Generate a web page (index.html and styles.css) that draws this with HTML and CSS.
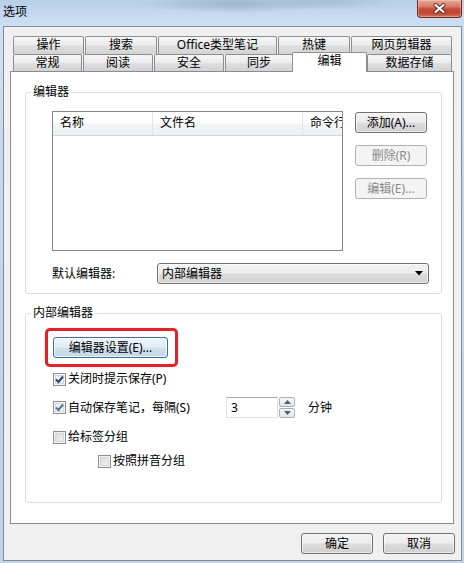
FILE: index.html
```html
<!DOCTYPE html>
<html lang="zh-CN">
<head>
<meta charset="utf-8">
<title>选项</title>
<link rel="stylesheet" href="styles.css">
</head>
<body>
<div class="window">
  <div class="titlebar">
    <span class="title">选项</span>
    <div class="close">
      <svg width="13" height="11" viewBox="0 0 13 11"><path d="M2.5 2 L10.5 9 M10.5 2 L2.5 9" stroke="#5a2a24" stroke-width="4" stroke-linecap="round"/><path d="M2.5 2 L10.5 9 M10.5 2 L2.5 9" stroke="#ffffff" stroke-width="2.2" stroke-linecap="round"/></svg>
    </div>
  </div>
  <div class="frame">
    <div class="client">
      <div class="tabctl">
        <div class="tabrow row1">
          <div class="tab w71">操作</div>
          <div class="tab w72">搜索</div>
          <div class="tab w119">Office类型笔记</div>
          <div class="tab w72">热键</div>
          <div class="tab w101">网页剪辑器</div>
        </div>
        <div class="tabrow row2">
          <div class="tab w69">常规</div>
          <div class="tab w70">阅读</div>
          <div class="tab w70">安全</div>
          <div class="tab w68">同步</div>
          <div class="tab sel">编辑</div>
          <div class="tab w85 last">数据存储</div>
        </div>
        <div class="page">
          <fieldset class="group g1">
            <legend>编辑器</legend>
            <div class="g1body">
              <div class="listrow">
                <div class="list">
                  <div class="lhead">
                    <div class="hc c1">名称</div>
                    <div class="hc c2">文件名</div>
                    <div class="hc c3">命令行</div>
                  </div>
                </div>
                <div class="sidebtns">
                  <div class="btn side">添加(A)...</div>
                  <div class="btn side disabled">删除(R)</div>
                  <div class="btn side disabled">编辑(E)...</div>
                </div>
              </div>
              <div class="comborow">
                <span class="clabel">默认编辑器:</span>
                <div class="combo">
                  <span>内部编辑器</span>
                  <svg width="8" height="5" viewBox="0 0 8 5"><path d="M0 0 H8 L4 4.5 Z" fill="#000"/></svg>
                </div>
              </div>
            </div>
          </fieldset>
          <fieldset class="group g2">
            <legend>内部编辑器</legend>
            <div class="g2body">
              <div class="highlight">
                <div class="btn focus wide">编辑器设置(E)...</div>
              </div>
              <div class="cbrow r1">
                <span class="cb checked"><svg width="11" height="11" viewBox="0 0 11 11"><path d="M2 5.5 L4.5 8 L9 2.5" fill="none" stroke="#23407e" stroke-width="2"/></svg></span>
                <span class="cblabel">关闭时提示保存(P)</span>
              </div>
              <div class="cbrow r2">
                <span class="cb checked light"><svg width="11" height="11" viewBox="0 0 11 11"><path d="M2 5.5 L4.5 8 L9 2.5" fill="none" stroke="#5a6f9a" stroke-width="2"/></svg></span>
                <span class="cblabel fixed">自动保存笔记，每隔(S)</span>
                <div class="spinedit">3</div>
                <div class="spinner">
                  <div class="sbtn"><svg width="7" height="4" viewBox="0 0 7 4"><path d="M0 4 H7 L3.5 0 Z" fill="#4c607a"/></svg></div>
                  <div class="sbtn"><svg width="7" height="4" viewBox="0 0 7 4"><path d="M0 0 H7 L3.5 4 Z" fill="#4c607a"/></svg></div>
                </div>
                <span class="unit">分钟</span>
              </div>
              <div class="cbrow r3">
                <span class="cb"></span>
                <span class="cblabel">给标签分组</span>
              </div>
              <div class="cbrow r4">
                <span class="cb"></span>
                <span class="cblabel">按照拼音分组</span>
              </div>
            </div>
          </fieldset>
        </div>
      </div>
      <div class="footer">
        <div class="btn foot">确定</div>
        <div class="btn foot">取消</div>
      </div>
    </div>
  </div>
</div>
</body>
</html>
```
FILE: styles.css
```css
* { box-sizing: border-box; }
html, body { margin: 0; padding: 0; }
body {
  width: 464px;
  height: 563px;
  overflow: hidden;
  font-family: "Noto Sans", "Noto Sans CJK SC", sans-serif;
  font-size: 12px;
  line-height: 14px;
  color: #000;
}
.window {
  width: 464px;
  height: 563px;
  display: flex;
  flex-direction: column;
  background:
    radial-gradient(ellipse 95px 9px at 235px 4px, rgba(110,125,150,0.35), rgba(110,125,150,0) 100%),
    radial-gradient(ellipse 60px 8px at 330px 2px, rgba(120,135,160,0.25), rgba(120,135,160,0) 100%),
    linear-gradient(180deg, #b7cfe8 0px, #c6d9ee 14px, #cddff2 26px, #c3d7ed 200px, #bfd3ea 563px);
}
.titlebar {
  height: 26px;
  flex: none;
  display: flex;
  justify-content: space-between;
  align-items: flex-start;
  padding-left: 3px;
}
.title {
  padding-top: 5px;
  line-height: 14px;
  font-size: 12px;
}
.close {
  width: 45px;
  height: 18px;
  margin-right: 2px;
  border: 1px solid #6e2b22;
  border-top: none;
  border-radius: 0 0 4px 4px;
  background: linear-gradient(180deg, #e7a998 0%, #d77a65 40%, #c44c35 52%, #c0452e 75%, #d2735b 100%);
  box-shadow: inset 0 0 0 1px rgba(255,230,220,0.35);
  display: flex;
  align-items: center;
  justify-content: center;
}
.frame {
  flex: 1;
  padding: 0 2px 2px 3px;
  display: flex;
}
.client {
  flex: 1;
  background: #f0f0f0;
  border: 1px solid #7f8b99;
  display: flex;
  flex-direction: column;
  padding: 9px 5px 0 6px;
}
.tabctl {
  width: 444px;
  display: flex;
  flex-direction: column;
}
.tabrow {
  display: flex;
  padding-left: 3px;
}
.row1 { height: 18px; align-items: stretch; }
.row2 { height: 17px; align-items: flex-end; }
.tab {
  border: 1px solid #8c8e94;
  border-bottom: none;
  border-radius: 2px 2px 0 0;
  background: linear-gradient(180deg, #f6f6f6 0%, #ececec 45%, #dedede 55%, #d3d3d3 100%);
  text-align: center;
  line-height: 16px;
  margin-right: 1px;
  white-space: nowrap;
}
.row2 .tab { height: 17px; }
.w68 { width: 68px; }
.w69 { width: 69px; }
.w70 { width: 70px; }
.w71 { width: 71px; }
.w72 { width: 72px; }
.w85 { width: 85px; }
.w101 { width: 101px; }
.w119 { width: 119px; }
.tab.last { margin-right: 0; }
.row2 .tab.sel {
  width: 75px;
  height: 20px;
  margin-left: -2px;
  margin-right: 0;
  margin-bottom: -1px;
  background: #fff;
  position: relative;
  z-index: 2;
  line-height: 16px;
  padding-bottom: 2px;
}
.page {
  height: 453px;
  background: #fff;
  border: 1px solid #898c95;
  display: flex;
  flex-direction: column;
}
.group {
  margin: 0 11px 0 14px;
  border: 1px solid #d5dfe5;
  border-radius: 3px;
  min-width: 0;
}
.group legend {
  padding: 0 2px;
  line-height: 14px;
}
.g1 {
  margin-top: 13px;
  padding: 12px 11px 9px 5px;
}
.g1body { padding-left: 21px; }
.listrow { display: flex; }
.list {
  width: 291px;
  height: 140px;
  border: 1px solid #828790;
  overflow: hidden;
  background: #fff;
}
.lhead {
  display: flex;
  height: 24px;
  border-bottom: 1px solid #d5d5d5;
  background: linear-gradient(180deg, #ffffff 0%, #ffffff 45%, #f3f4f6 55%, #eff0f2 100%);
  white-space: nowrap;
}
.hc {
  flex: none;
  padding-left: 7px;
  line-height: 22px;
  border-right: 1px solid #e3e4e6;
}
.c1 { width: 100px; }
.c2 { width: 150px; }
.c3 { width: 60px; border-right: none; }
.sidebtns {
  margin-left: 12px;
  padding-top: 1px;
  display: flex;
  flex-direction: column;
  gap: 12px;
}
.btn {
  height: 21px;
  border: 1px solid #707070;
  border-radius: 3px;
  background: linear-gradient(180deg, #f3f3f3 0%, #ececec 48%, #dddddd 52%, #d0d0d0 100%);
  box-shadow: inset 0 0 0 1px rgba(255,255,255,0.6);
  text-align: center;
  line-height: 19px;
  white-space: nowrap;
}
.btn.side { width: 72px; }
.btn.disabled {
  border-color: #adb2b5;
  background: #f4f4f4;
  color: #8a8a8a;
  box-shadow: none;
}
.comborow {
  margin-top: 12px;
  display: flex;
  align-items: center;
}
.clabel { width: 105px; }
.combo {
  width: 272px;
  height: 21px;
  border: 1px solid #707070;
  border-radius: 3px;
  background: linear-gradient(180deg, #f3f3f3 0%, #ececec 48%, #dddddd 52%, #d0d0d0 100%);
  box-shadow: inset 0 0 0 1px rgba(255,255,255,0.6);
  display: flex;
  align-items: center;
  justify-content: space-between;
  padding: 0 5px 0 4px;
  line-height: 19px;
}
.g2 {
  margin-top: 12px;
  padding: 8px 11px 33px 5px;
}
.g2body { padding-left: 22px; }
.highlight {
  width: 133px;
  height: 39px;
  margin-left: -8px;
  border: 3px solid #e0232b;
  border-radius: 5px;
  padding: 6px 7px 6px 5px;
  box-shadow: 0 0 1px rgba(200,30,40,0.6);
}
.btn.wide { width: 115px; }
.btn.focus {
  border-color: #3d6f99;
  background: linear-gradient(180deg, #eef5fb 0%, #e1ecf5 48%, #d0e1ee 52%, #c2d7e7 100%);
  box-shadow: inset 0 0 0 1px rgba(255,255,255,0.7);
}
.cbrow {
  display: flex;
  align-items: center;
  height: 16px;
}
.r1 { margin-top: 4px; }
.r2 { margin-top: 10px; height: 21px; }
.r3 { margin-top: 11px; }
.r4 { margin-top: 8px; padding-left: 45px; }
.cb {
  flex: none;
  width: 13px;
  height: 13px;
  border: 1px solid #8e8f8f;
  background: linear-gradient(135deg, #cfd1d4 0%, #e6e7e9 50%, #f8f8f8 100%);
  box-shadow: inset 0 0 0 1px #f4f4f4, inset 0 0 0 2px #d4d6d9;
  display: flex;
  align-items: center;
  justify-content: center;
}
.cb.checked {
  background: linear-gradient(135deg, #e3e5e8 0%, #f0f1f2 50%, #fbfbfb 100%);
}
.cb svg { display: block; }
.cblabel {
  margin-left: 2px;
  white-space: nowrap;
}
.cblabel.fixed { width: 158px; flex: none; }
.spinedit {
  width: 52px;
  height: 21px;
  border: 1px solid #dfe3e8;
  border-top-color: #abadb3;
  padding-left: 4px;
  line-height: 19px;
  background: #fff;
}
.spinner {
  width: 16px;
  height: 21px;
  margin-left: 1px;
  display: flex;
  flex-direction: column;
  gap: 1px;
}
.sbtn {
  flex: 1;
  border: 1px solid #aab1ba;
  border-radius: 2px;
  background: linear-gradient(180deg, #f5f6f7 0%, #e4e6e9 100%);
  display: flex;
  align-items: center;
  justify-content: center;
}
.sbtn svg { display: block; }
.unit { margin-left: 13px; }
.footer {
  margin-top: 9px;
  display: flex;
  justify-content: flex-end;
  gap: 10px;
  padding-right: 0;
  width: 445px;
}
.btn.foot { width: 72px; }
```
